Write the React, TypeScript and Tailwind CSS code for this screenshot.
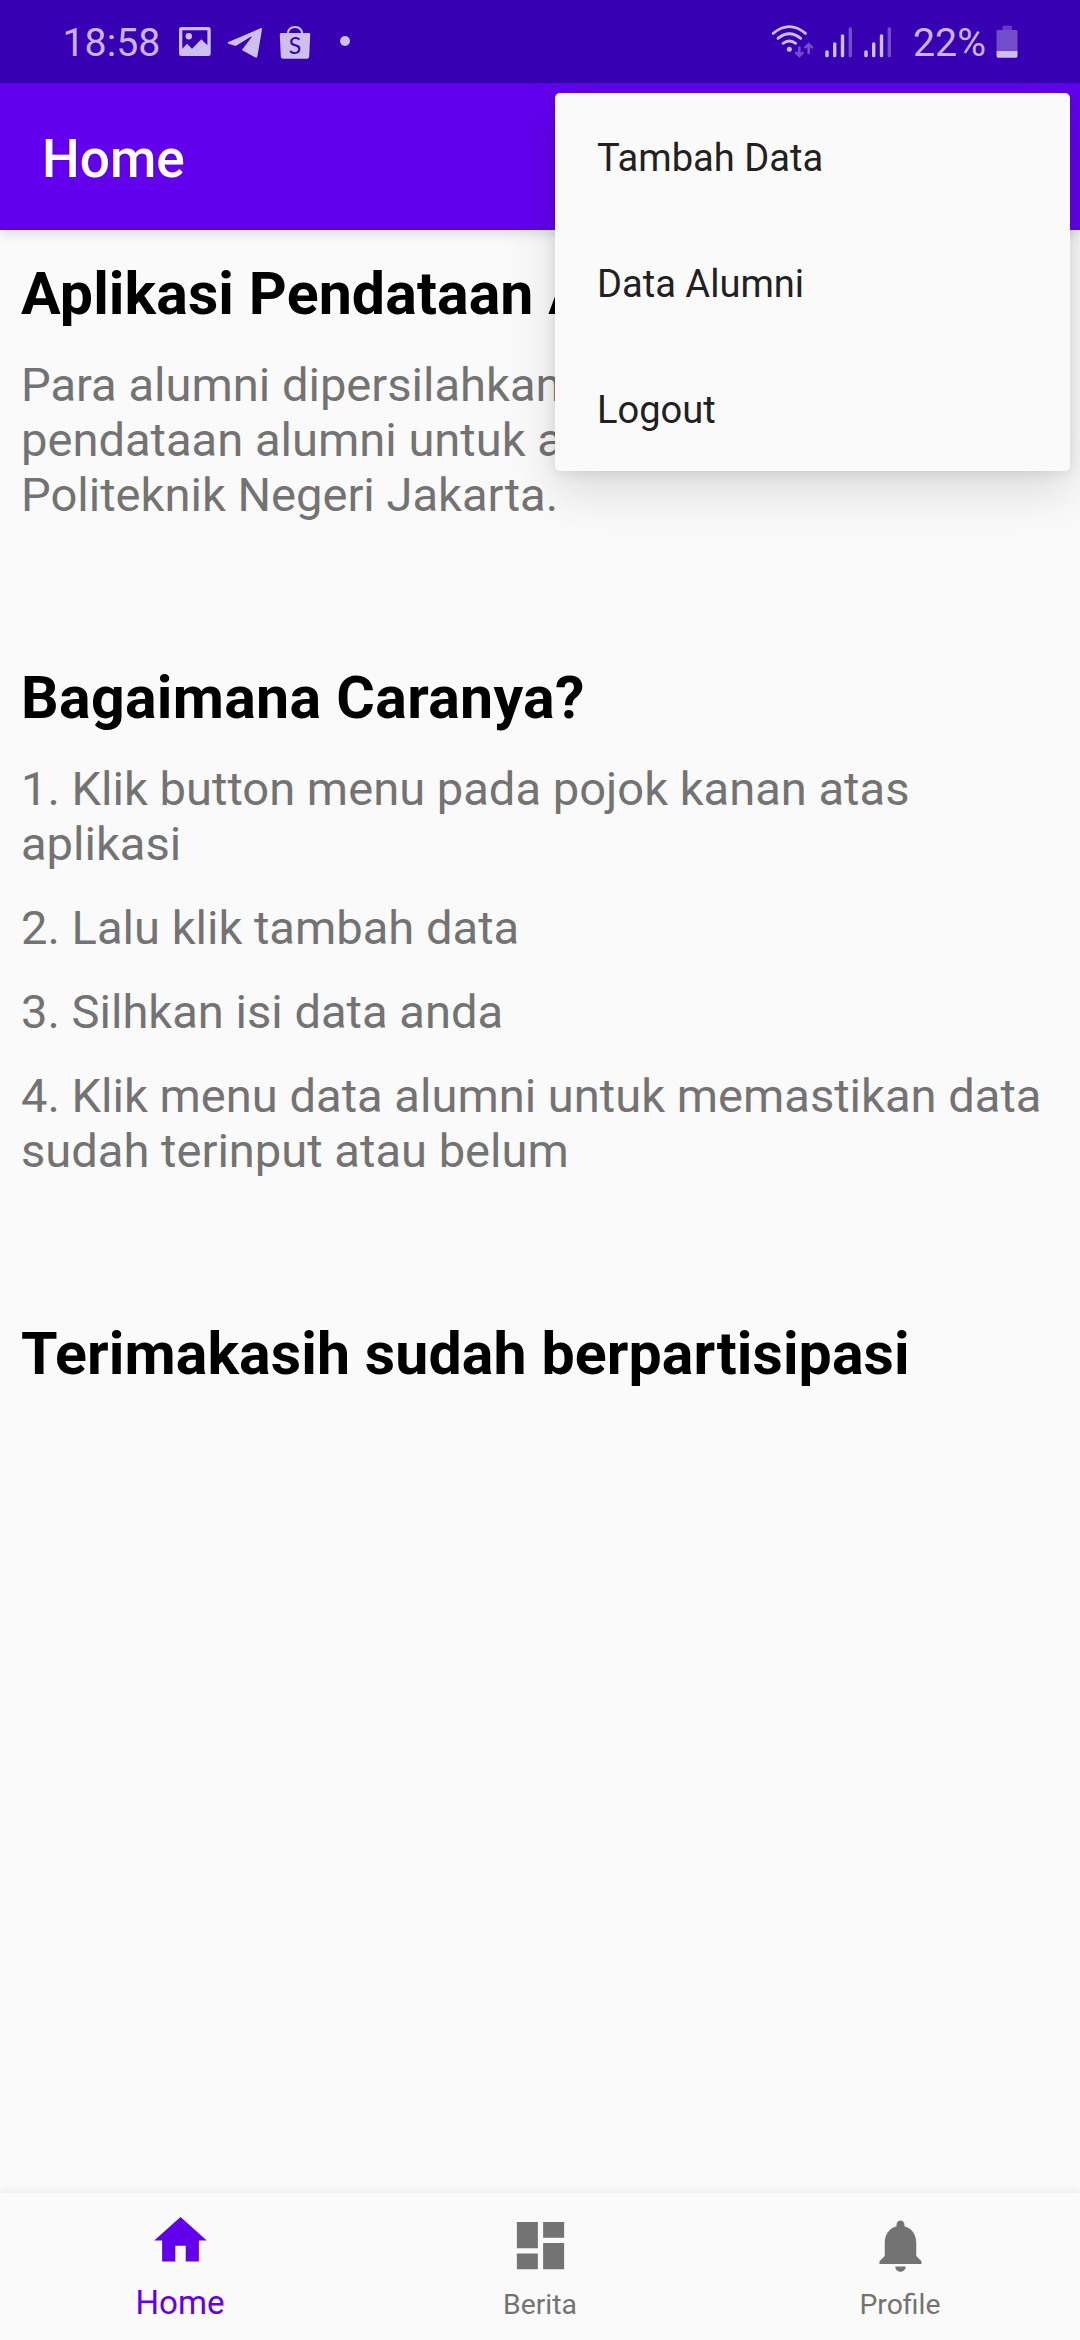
import type { ReactNode } from "react";

const TINT = "#cdbfee";

function StatusBar() {
  return (
    <header className="relative z-20 flex h-[83px] shrink-0 items-start bg-[#3700b3] pl-[62.5px] pr-[62px] text-[39.3px] leading-[87px] text-[#cbb5fb]">
      <span className="w-[116.5px]">18:58</span>
      <svg className="h-[83px] w-8" viewBox="179 0 32 83" fill={TINT}>
        <path
          fillRule="evenodd"
          d="M181.5 27h26.7q2.5 0 2.5 2.5v24q0 2.5-2.5 2.5h-26.7q-2.5 0-2.5-2.5v-24q0-2.500 2.500-2.500zM182.300 30.300v18.400l4.700-4.900 5 5 9.300-9.500 6.100 6v-15z"
        />
        <circle cx="188.800" cy="36.200" r="3.200" />
      </svg>
      <svg className="ml-[16px] h-[83px] w-9" viewBox="227 0 36 83" fill={TINT}>
        <path d="M260.500 28.200q1.800-.6 1.500 1.300l-4.600 26.800q-.5 2-2.400 1L242.600 50.600q-.9-.7 0-1.700L251.500 37.200q.8-1.300-.7-.5L236.500 45.600q-.8.4-1.700.2L228.400 43.700q-1.200-.7 0-1.700z" />
      </svg>
      <svg className="ml-[16px] h-[83px] w-8" viewBox="279 0 32 83" fill={TINT}>
        <path d="M287.800 34.500c0-5 3-7.600 7.200-7.600s7.200 2.600 7.200 7.600" fill="none" stroke={TINT} strokeWidth="2" />
        <path d="M281 33h28q1.300 0 1.200 1.300l-1 22.200q-.2 2.200-2.400 2.200h-23.600q-2.200 0-2.400-2.200l-1-22.200q-.1-1.300 1.200-1.300z" />
        <text x="295" y="54.300" textAnchor="middle" fontSize="23" fontWeight="400" fill="#3700b3" className="font-['Lato']">S</text>
      </svg>
      <span className="mt-9 ml-[29px] h-[10px] w-[10px] rounded-full bg-[#cdbfee]" />
      <div className="ml-auto flex">
        <svg className="h-[83px] w-11" viewBox="771 0 44 83" fill="none" stroke={TINT} strokeWidth="2.800" strokeLinecap="round">
          <path d="M773.200 33.400Q789.300 19.800 805.500 33.400M778 38.400Q789.300 29.200 800.700 38.400M783 43.300Q789.300 38.800 795.700 43.300" />
          <circle cx="789.300" cy="49.300" r="2.500" fill={TINT} stroke="none" />
          <path
            d="M799.300 47.500v8M796 52.800l3.300 3.200 3.300-3.200M808.700 53v-8.500M805.300 47.400l3.400-3.200 3.300 3.200"
            strokeWidth="2.600"
            opacity=".4"
          />
        </svg>
        {[0, 1].map((i) => (
          <svg key={i} className="ml-[9px] h-[83px] w-[30px]" viewBox="824 0 30 83" fill={TINT}>
            <rect x="825.300" y="50.300" width="3.400" height="7" rx="1.500" />
            <rect x="833" y="42.300" width="3.400" height="15" rx="1.500" />
            <rect x="840.800" y="34.300" width="3.400" height="23" rx="1.500" />
            <rect x="848.600" y="27.300" width="3.400" height="30" rx="1.500" opacity=".4" />
          </svg>
        ))}
        <span className="ml-5 w-[83px]">22%</span>
        <svg className="h-[83px] w-[22px]" viewBox="996.500 0 22 83" fill={TINT}>
          <path d="M1003 30v-3q0-1.500 1.500-1.500h6.500q1.500 0 1.500 1.500v3z" opacity=".3" />
          <path d="M998.500 30h18q1.500 0 1.500 1.500V51h-21V31.500q0-1.500 1.500-1.500z" opacity=".4" />
          <path d="M997 51h21v5q0 1.700-1.700 1.700h-17.600q-1.700 0-1.700-1.700z" />
        </svg>
      </div>
    </header>
  );
}

function Heading({ children, wide = false }: { children: ReactNode; wide?: boolean }) {
  return (
    <h2
      className={`text-[59.06px] leading-[69px] font-bold whitespace-nowrap text-black ${
        wide ? "tracking-[0.3px]" : "tracking-[0.1px]"
      }`}
    >
      {children}
    </h2>
  );
}

function Body({ children }: { children: ReactNode }) {
  return <p className="text-[47.1px] leading-[55px] text-[#737373]">{children}</p>;
}

const menu = ["Tambah Data", "Data Alumni", "Logout"];

function OverflowMenu() {
  return (
    <ul className="absolute top-[93px] left-[555px] z-30 w-[515px] rounded-[5px] bg-[#fafafa] shadow-[0_20px_50px_rgba(0,0,0,0.13),0_2px_14px_rgba(0,0,0,0.09)]">
      {menu.map((m) => (
        <li key={m} className="flex h-[126px] items-center pt-1.5 pl-[42px] text-[38.1px] text-[#212121]">
          {m}
        </li>
      ))}
    </ul>
  );
}

function NavIcon({ d }: { d: string }) {
  return (
    <svg className="h-[63px] w-[63px]" viewBox="0 0 24 24" fill="currentColor">
      <path d={d} />
    </svg>
  );
}

function BottomNav() {
  return (
    <nav className="grid h-[147px] shrink-0 grid-cols-3 bg-[#fafafa] text-[28.35px] leading-[34px] text-[#737373] shadow-[0_0_10px_rgba(0,0,0,0.09)]">
      <div className="flex flex-col items-center pt-4 text-[#6200ee]">
        <NavIcon d="M10 20v-6h4v6h5v-8h3L12 3 2 12h3v8z" />
        <span className="mt-[12px] text-[33.08px] leading-[38px]">Home</span>
      </div>
      <div className="flex flex-col items-center pt-[21px]">
        <NavIcon d="M3 13h8V3H3v10zm0 8h8v-6H3v6zm10 0h8V11h-8v10zm0-18v6h8V3h-8z" />
        <span className="mt-[11px]">Berita</span>
      </div>
      <div className="flex flex-col items-center pt-[21px]">
        <NavIcon d="M12 22c1.100 0 2-.9 2-2h-4c0 1.100.89 2 2 2zm6-6v-5c0-3.070-1.640-5.640-4.500-6.320V4c0-.83-.67-1.500-1.500-1.500s-1.500.67-1.500 1.500v.68C7.630 5.360 6 7.920 6 11v5l-2 2v1h16v-1l-2-2z" />
        <span className="mt-[11px]">Profile</span>
      </div>
    </nav>
  );
}

export default function App() {
  return (
    <div className="relative flex h-[2340px] w-[1080px] flex-col overflow-hidden bg-[#fafafa] font-['Roboto',sans-serif]">
      <StatusBar />
      <div className="relative z-10 flex h-[147px] shrink-0 items-center bg-[#6200ee] pt-1 pl-[42px] shadow-[0_3px_12px_rgba(0,0,0,0.14)]">
        <h1 className="text-[53.2px] leading-[64px] font-medium text-white">Home</h1>
      </div>
      <main className="flex flex-1 flex-col px-[21px] pt-[29px]">
        <section className="flex flex-col gap-[29px]">
          <Heading>Aplikasi Pendataan Alumni</Heading>
          <Body>
            Para alumni dipersilahkan mengisi
            <br />
            pendataan alumni untuk alumni
            <br />
            Politeknik Negeri Jakarta.
          </Body>
        </section>
        <section className="mt-[141px] flex flex-col gap-[29px]">
          <Heading wide>Bagaimana Caranya?</Heading>
          <Body>
            1. Klik button menu pada pojok kanan atas
            <br />
            aplikasi
          </Body>
          <Body>2. Lalu klik tambah data</Body>
          <Body>3. Silhkan isi data anda</Body>
          <Body>
            4. Klik menu data alumni untuk memastikan data
            <br />
            sudah terinput atau belum
          </Body>
        </section>
        <section className="mt-[141px]">
          <Heading>Terimakasih sudah berpartisipasi</Heading>
        </section>
      </main>
      <BottomNav />
      <OverflowMenu />
    </div>
  );
}
